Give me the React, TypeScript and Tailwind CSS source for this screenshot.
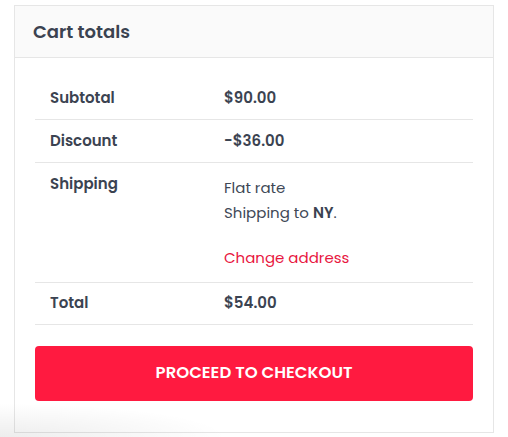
export default function App() {
  const font = { fontFamily: 'Poppins, Inter, "Noto Sans", sans-serif' }
  return (
    <div className="relative h-[437px] w-[508px] overflow-hidden bg-white pt-[5px] pl-[14px] text-[#3b4351]" style={font}>
      <div className="w-[480px] border border-[#e6e6e6] bg-white">
        <div className="flex h-[52px] items-center border-b border-[#e6e6e6] bg-[#fafafa] px-[18px]">
          <h2 className="text-[18px] font-semibold text-[#3b4351]">Cart totals</h2>
        </div>
        <div className="px-5 pt-[19px] pb-[31px]">
          <table className="w-full border-collapse text-[15px]">
            <tbody>
              <tr className="border-b border-[#e6e6e6]">
                <th className="w-[189px] py-[11px] pl-[15px] text-left align-top font-semibold leading-5">Subtotal</th>
                <td className="py-[11px] align-top font-semibold leading-5">$90.00</td>
              </tr>
              <tr className="border-b border-[#e6e6e6]">
                <th className="py-[11px] pl-[15px] text-left align-top font-semibold leading-5">Discount</th>
                <td className="py-[11px] align-top font-semibold leading-5">-$36.00</td>
              </tr>
              <tr className="border-b border-[#e6e6e6]">
                <th className="py-[11px] pl-[15px] text-left align-top font-semibold leading-5">Shipping</th>
                <td className="pt-[12px] pb-[12px] align-top leading-[25px] text-[#404856]">
                  <p>Flat rate</p>
                  <p className="mb-[20px]">
                    Shipping to <strong className="font-semibold text-[#3b4351]">NY</strong>.
                  </p>
                  <a href="#" className="text-[#e8173f]">Change address</a>
                </td>
              </tr>
              <tr className="border-b border-[#e6e6e6]">
                <th className="pt-[10px] pb-[11px] pl-[15px] text-left align-top font-semibold leading-5">Total</th>
                <td className="pt-[10px] pb-[11px] align-top font-semibold leading-5">$54.00</td>
              </tr>
            </tbody>
          </table>
          <button className="mt-[21px] flex h-[55px] w-full items-center justify-center rounded-[4px] bg-[#ff1a40] text-[16.5px] font-semibold uppercase text-white">
            Proceed to checkout
          </button>
        </div>
      </div>
      {/* soft shadow bleeding in at the bottom left */}
      <div className="pointer-events-none absolute bottom-0 left-0 h-[34px] w-[230px] bg-[radial-gradient(ellipse_at_bottom_left,rgba(0,0,0,0.07),transparent_70%)]" />
    </div>
  )
}
